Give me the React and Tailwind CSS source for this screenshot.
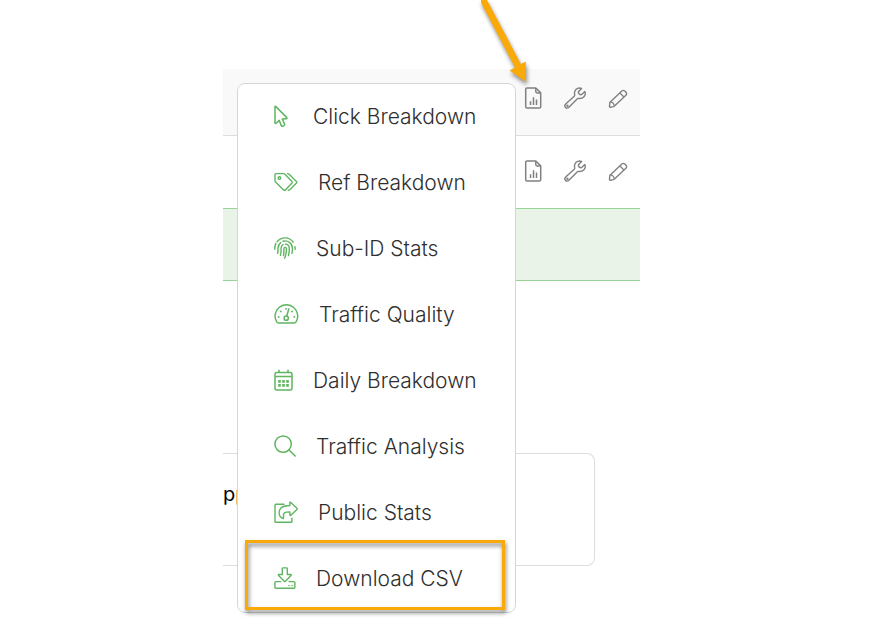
import React from 'react';

const CursorIcon = () => (
  <svg width="19" height="22" viewBox="0 0 19 22" fill="none" stroke="currentColor" strokeWidth="1.5" strokeLinejoin="round" aria-hidden="true">
    <path d="M1 2 Q1 .8 1.9 1.6 L12.6 12.4 Q13.6 13.7 12 13.8 L8.3 14 L10.7 19.4 Q10.8 20.2 10 20.6 L8.4 21.2 Q7.6 21.3 7.3 20.6 L5.2 15.4 L2.2 18.2 Q1 19 1 17.8 Z" />
  </svg>
);

const TagsIcon = () => (
  <svg width="24" height="20" viewBox="0 0 24 20" fill="none" stroke="currentColor" strokeWidth="1.4" strokeLinejoin="round" aria-hidden="true">
    <path d="M1 2.6 Q1 1.6 2 1.6 L9.3 1.6 Q10.3 1.6 11 2.3 L18 9.4 Q18.6 10.2 18 10.9 L11.3 17.9 Q10.4 18.6 9.6 17.9 L1.8 10.3 Q1 9.6 1 8.6 Z" />
    <circle cx="5.4" cy="6" r="1.3" />
    <path d="M13 1.6 Q14.4 1.5 15.4 2.4 L22.5 9.4 Q23.2 10.2 22.5 10.9 L15.8 17.7 Q14.9 18.5 13.7 18.2" />
  </svg>
);

const FingerprintIcon = () => (
  <svg width="22" height="22" viewBox="0 0 22 22" fill="none" stroke="currentColor" strokeWidth="1.4" strokeLinecap="round" aria-hidden="true">
    <path d="M.8 12.2 C.7 9.3 1 8.2 1.9 6.4" />
    <path d="M3.1 4.7 C7.2 -.4 15.3 -.6 19.2 5.2" />
    <path d="M20.9 9.6 C21.2 10.6 21.2 11.5 21.1 12.4" />
    <path d="M3.6 16.4 C4.1 14.8 4 13.2 4 11.2 C4.1 8.7 5.2 6.8 6.7 5.6" />
    <path d="M9 4.2 C13.8 2.9 18.3 6.2 18.4 11 C18.5 13 18.3 15 17.9 16.4" />
    <path d="M6.4 18.3 C7.2 15.8 7 13.8 7.1 11 C7.2 9.2 8 8.1 9.1 7.5" />
    <path d="M11.4 7.1 C13.8 7.2 15.2 9 15.3 11.1 C15.4 13.8 15.1 16.2 14.5 18.6" />
    <path d="M9.4 18.6 C10.1 16.4 9.9 13.6 9.9 11.6 C10 9.9 12.4 9.9 12.4 11.6 C12.5 15 12.1 17.8 10.6 21.2" />
  </svg>
);

const GaugeIcon = () => (
  <svg width="25" height="20" viewBox="0 0 25 20" fill="none" stroke="currentColor" strokeWidth="1.5" strokeLinecap="round" aria-hidden="true">
    <path d="M4.3 18.9 Q3.3 18.9 2.8 18 A11.3 11.3 0 1 1 22 18 Q21.5 18.9 20.5 18.9 Z" />
    <circle cx="12.2" cy="14.2" r="2.1" strokeWidth="1.5" />
    <path d="M12.8 11.8 L14.8 5" />
    <path d="M4.6 12.9 h.1 M6.7 7.4 h.1 M12 4.8 h.1 M18 7.4 h.1 M20.2 12.9 h.1" strokeWidth="1.8" />
  </svg>
);

const CalendarIcon = () => (
  <svg width="19" height="22" viewBox="0 0 19 22" fill="none" stroke="currentColor" strokeWidth="1.5" aria-hidden="true">
    <rect x="1" y="3.5" width="17" height="17.5" rx="1.5" />
    <path d="M1 7.5 H18 M5 .8 V3.5 M14 .8 V3.5" />
    <path d="M4.2 12.4 h2.6 M8.2 12.4 h2.6 M12.2 12.4 h2.6 M4.2 16.4 h2.6 M8.2 16.4 h2.6 M12.2 16.4 h2.6" strokeWidth="2.6" />
  </svg>
);

const SearchIcon = () => (
  <svg width="22" height="22" viewBox="0 0 22 22" fill="none" stroke="currentColor" strokeWidth="1.5" strokeLinecap="round" aria-hidden="true">
    <circle cx="9.1" cy="9.1" r="8.2" />
    <path d="M15 15 L21.2 21" />
  </svg>
);

const ShareIcon = () => (
  <svg width="24" height="22" viewBox="0 0 24 22" fill="none" stroke="currentColor" strokeWidth="1.4" strokeLinejoin="round" strokeLinecap="round" aria-hidden="true">
    <path d="M10 3.3 H1.8 Q1 3.3 1 4.1 V20.4 Q1 21.2 1.8 21.2 H17.1 Q17.9 21.2 17.9 20.4 V17.3" />
    <path d="M15.9 1.6 Q16 .8 16.8 1.4 L23 7.2 Q23.5 7.8 23 8.4 L16.8 14.3 Q16 14.8 15.9 14 V10.9 C11 10.8 9.3 12 9.5 14.3 C9.6 15.8 9.8 16.6 9.2 17.5 C6.8 16.7 5.1 14.6 5.1 11.8 C5.1 7 8.6 4.5 15.9 4.5 Z" />
  </svg>
);

const DownloadIcon = () => (
  <svg width="22" height="22" viewBox="0 0 22 22" fill="none" stroke="currentColor" strokeWidth="1.4" strokeLinejoin="round" strokeLinecap="round" aria-hidden="true">
    <path d="M8.3 1.6 Q8.3 .9 9 .9 H12.6 Q13.3 .9 13.3 1.6 V7.5 H16.7 Q17.7 7.6 17 8.4 L11.4 14.2 Q10.8 14.8 10.2 14.2 L4.6 8.4 Q3.9 7.6 4.9 7.5 H8.3 Z" />
    <path d="M6.7 14.6 H1.8 Q.9 14.6 .9 15.5 V20.3 Q.9 21.2 1.8 21.2 H20 Q20.9 21.2 20.9 20.3 V15.5 Q20.9 14.6 20 14.6 H15" />
    <path d="M15 18.6 h.1 M18 18.6 h.1" strokeWidth="1.5" />
  </svg>
);

const ReportIcon = () => (
  <svg width="18" height="22" viewBox="0 0 18 22" fill="none" stroke="currentColor" strokeWidth="1.5" strokeLinejoin="round" aria-hidden="true">
    <path d="M11.8 1 H3 Q1.7 1 1.7 2.3 V19.7 Q1.7 21 3 21 H15.4 Q16.7 21 16.7 19.7 V5.9 Z" />
    <path d="M11.8 1 V4.6 Q11.8 5.9 13.1 5.9 H16.7" />
    <path d="M6.5 14.2 V18 M9.5 10.2 V18 M12.5 12.4 V18" />
  </svg>
);

const WrenchIcon = () => (
  <svg width="22" height="22" viewBox="0 0 22 22" fill="none" stroke="currentColor" strokeWidth="1.4" strokeLinejoin="round" aria-hidden="true">
    <path d="M17.6 1.5 C13.4 -.3 9.6 3.4 10.7 7.8 Q10.8 8.6 10.2 9.2 L1.7 17 C-.7 19.4 2.5 22.7 4.9 20.2 L13.1 11.9 Q13.7 11.3 14.5 11.4 C19 12 22.5 8.4 20.8 4.6 L17.7 7.5 Q17.1 7.9 16.4 7.6 L15.1 7 L14.5 5.6 Q14.2 5 14.7 4.4 Z" />
    <circle cx="3.4" cy="18.7" r=".5" />
  </svg>
);

const PencilIcon = () => (
  <svg width="20" height="20" viewBox="0 -1 20 20" fill="none" stroke="currentColor" strokeWidth="1.4" strokeLinejoin="round" aria-hidden="true">
    <path d="M2.3 12.9 L13.8 2 Q15.3 .7 16.8 2.1 L18 3.3 Q19.2 4.7 17.9 6.2 L6.5 17 Q6 17.4 5.3 17.6 L2.3 18.2 Q1.4 18.3 1.5 17.4 L1.8 13.8 Q1.9 13.2 2.3 12.9 Z" />
    <path d="M2.5 12.9 Q5.8 13.4 6.3 16.9 M11.9 4 L15.9 8" strokeWidth="1.2" />
  </svg>
);

const menuItems = [
  { label: 'Click Breakdown', icon: CursorIcon },
  { label: 'Ref Breakdown', icon: TagsIcon },
  { label: 'Sub-ID Stats', icon: FingerprintIcon },
  { label: 'Traffic Quality', icon: GaugeIcon },
  { label: 'Daily Breakdown', icon: CalendarIcon },
  { label: 'Traffic Analysis', icon: SearchIcon },
  { label: 'Public Stats', icon: ShareIcon },
  { label: 'Download CSV', icon: DownloadIcon, highlighted: true },
];

function RowActions() {
  return (
    <div className="flex items-center justify-end gap-[22px] pr-3 text-[#808080]">
      <button type="button" aria-label="Reports"><ReportIcon /></button>
      <button type="button" aria-label="Settings"><WrenchIcon /></button>
      <button type="button" aria-label="Edit"><PencilIcon /></button>
    </div>
  );
}

function StatsMenu() {
  return (
    <div className="absolute left-3.5 top-3.5 w-[279px] rounded-lg border border-[#d6d6d6] bg-white">
      {menuItems.map(({ label, icon: Icon, highlighted }) => (
        <button
          key={label}
          type="button"
          className="relative flex h-[66px] w-full items-center gap-5 pb-0.5 pl-9 text-left text-[21px] font-light text-[#2f2f2f]"
        >
          <span className="text-[#5fb560]"><Icon /></span>
          <span className="pt-0.5">{label}</span>
          {highlighted && (
            <span className="absolute -top-1.5 bottom-0.5 left-[7px] right-2.5 border-[3px] border-[#f9a908] drop-shadow-[1px_3px_2px_rgba(0,0,0,0.5)]" />
          )}
        </button>
      ))}
    </div>
  );
}

export default function App() {
  return (
    <div className="min-h-screen bg-white pl-[223px] pr-[235px] pt-[69px] font-['Inter',sans-serif]">
      <div className="relative">
        {/* Table rows */}
        <div className="h-[67px] border-b border-[#dddddd] bg-[#f9f9f9] pt-[18px]">
          <RowActions />
        </div>
        <div className="h-[73px] border-b border-[#97d497] pt-6">
          <RowActions />
        </div>
        <div className="h-[72px] border-b border-[#97d497] bg-[#e9f3e8]" />

        {/* Card behind the menu */}
        <div className="mr-[45px] mt-[172px] h-[113px] rounded-r-lg border-y border-r border-[#dddddd] pt-[26px]">
          <p className="text-xl text-black">pp</p>
        </div>

        <StatsMenu />

        {/* Pointer arrow */}
        <svg
          className="absolute -top-[69px] left-[253px] overflow-visible drop-shadow-[1px_3px_2px_rgba(0,0,0,0.45)]"
          width="56"
          height="84"
          viewBox="0 0 56 84"
          fill="#f9a908"
          aria-hidden="true"
        >
          <path d="M5 0 H11 L44.8 63.9 L49.8 61.5 L50 82 L33.6 70.4 L39 67.4 L5 2.5 Z" />
        </svg>
      </div>
    </div>
  );
}
